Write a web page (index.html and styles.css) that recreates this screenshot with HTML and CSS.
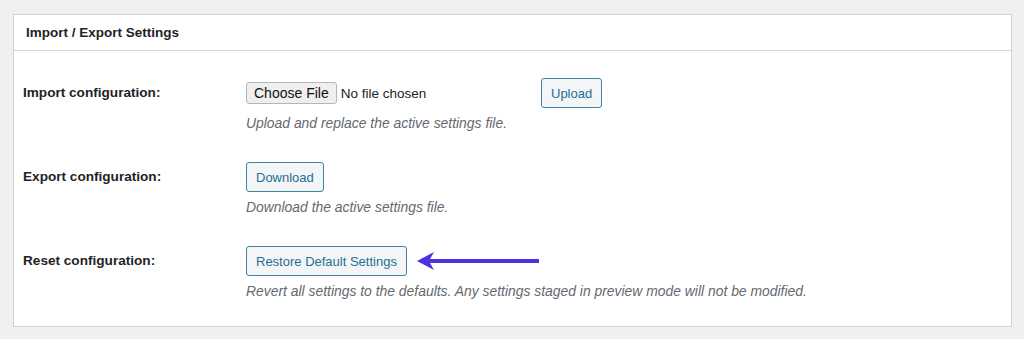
FILE: index.html
```html
<!DOCTYPE html>
<html lang="en">
<head>
  <meta charset="UTF-8">
  <meta name="viewport" content="width=device-width, initial-scale=1.0">
  <title>Import / Export Settings</title>
  <link rel="stylesheet" href="styles.css">
</head>
<body>
  <div class="postbox">
    <h2 class="hndle">Import / Export Settings</h2>
    <div class="inside">
      <div class="row">
        <div class="label">Import configuration:</div>
        <div class="field">
          <div class="controls">
            <input type="file" class="file">
            <button class="button">Upload</button>
          </div>
          <p class="description">Upload and replace the active settings file.</p>
        </div>
      </div>
      <div class="row">
        <div class="label">Export configuration:</div>
        <div class="field">
          <div class="controls">
            <button class="button">Download</button>
          </div>
          <p class="description">Download the active settings file.</p>
        </div>
      </div>
      <div class="row">
        <div class="label">Reset configuration:</div>
        <div class="field">
          <div class="controls">
            <button class="button">Restore Default Settings</button>
            <svg class="arrow" width="124" height="20" viewBox="0 0 124 20">
              <path d="M122 10 H10" stroke="#4b34de" stroke-width="4" fill="none"/>
              <path d="M0 10 L17 1 L12 10 L17 19 Z" fill="#4b34de"/>
            </svg>
          </div>
          <p class="description">Revert all settings to the defaults. Any settings staged in preview mode will not be modified.</p>
        </div>
      </div>
    </div>
  </div>
</body>
</html>
```

FILE: styles.css
```css
* {
  margin: 0;
  padding: 0;
  box-sizing: border-box;
}
body {
  background: #f0f0f1;
  font-family: "Liberation Sans", Arial, sans-serif;
  font-size: 13px;
  color: #1d2327;
}
.postbox {
  margin: 14px 12px 0 13px;
  width: 999px;
  height: 313px;
  background: #fff;
  border: 1px solid #cfd1d4;
}
.hndle {
  height: 36px;
  line-height: 35px;
  padding-left: 12px;
  font-size: 13.5px;
  font-weight: 700;
  border-bottom: 1px solid #d4d6d9;
}
.inside {
  padding: 27px 0 0 9px;
  display: flex;
  flex-direction: column;
  gap: 29px;
}
.row {
  display: flex;
}
.label {
  width: 223px;
  line-height: 30px;
  font-weight: 700;
  font-size: 13.6px;
}
.controls {
  display: flex;
  align-items: center;
  height: 30px;
}
.file {
  width: 295px;
  font-family: "Liberation Sans", Arial, sans-serif;
  font-size: 13.5px;
  color: #1d2327;
}
.file::file-selector-button {
  height: 22px;
  padding: 0 7px;
  margin-right: 4px;
  font-family: "Liberation Sans", Arial, sans-serif;
  font-size: 14px;
  color: #111;
  background: #efefef;
  border: 1px solid #b5b5b5;
  border-radius: 3px;
}
.button {
  height: 30px;
  padding: 0 9px;
  font-family: "Liberation Sans", Arial, sans-serif;
  font-size: 13px;
  color: #1f6f96;
  background: #f3f5f6;
  border: 1px solid #3b84a3;
  border-radius: 3px;
  cursor: pointer;
}
.arrow {
  margin-left: 10px;
}
.description {
  margin-top: 5px;
  line-height: 20px;
  font-style: italic;
  font-size: 13.9px;
  color: #646970;
}
```
